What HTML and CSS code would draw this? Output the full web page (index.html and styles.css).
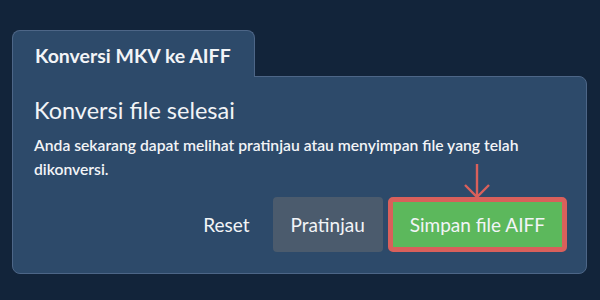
FILE: index.html
```html
<!DOCTYPE html>
<html lang="id">
<head>
    <meta charset="UTF-8">
    <title>Konversi MKV ke AIFF</title>
    <link rel="stylesheet" href="styles.css">
</head>
<body>
    <div class="converter">
        <div class="tab">Konversi MKV ke AIFF</div>
        <div class="panel">
            <h2>Konversi file selesai</h2>
            <p>Anda sekarang dapat melihat pratinjau atau menyimpan file yang telah dikonversi.</p>
            <div class="actions">
                <button class="reset">Reset</button>
                <button class="preview">Pratinjau</button>
                <button class="save">
                    <svg class="hint" width="30" height="36" viewBox="0 0 30 36">
                        <path d="M15 1 V34 M3 22 L15 34 L27 22" fill="none" stroke="#d9605b" stroke-width="2.4"/>
                    </svg>
                    <span>Simpan file AIFF</span>
                </button>
            </div>
        </div>
    </div>
</body>
</html>
```

FILE: styles.css
```css
* {
    margin: 0;
    padding: 0;
    box-sizing: border-box;
}

body {
    background: #12243a;
    font-family: Lato, "Open Sans", sans-serif;
    color: #f2f4f7;
}

.converter {
    margin: 30px 13px 0 12px;
}

.tab {
    display: inline-block;
    width: 243px;
    height: 47px;
    padding: 13px 0 0 22px;
    background: #2d4a6a;
    border: 1px solid #4d6687;
    border-bottom: none;
    border-radius: 8px 8px 0 0;
    font-size: 19.5px;
    font-weight: bold;
    line-height: 1.2;
    position: relative;
    z-index: 1;
    margin-bottom: -1px;
}

.panel {
    background: #2d4a6a;
    border: 1px solid #4d6687;
    border-radius: 0 8px 8px 8px;
    padding: 18px 19px 21px 21px;
}

.panel h2 {
    font-size: 23.5px;
    font-weight: normal;
    line-height: 30px;
}

.panel p {
    font-size: 15.7px;
    font-weight: 600;
    line-height: 24px;
    margin-top: 8px;
}

.actions {
    display: flex;
    justify-content: flex-end;
    align-items: center;
    gap: 5px;
    margin-top: 16px;
}

button {
    border: none;
    font-family: inherit;
    font-size: 19px;
    color: #f2f4f7;
    cursor: pointer;
    height: 55px;
    border-radius: 4px;
}

.reset {
    background: none;
    padding: 0 18px;
}

.preview {
    background: #4b5b6d;
    padding: 0 18px;
}

.save {
    position: relative;
    background: #5cb85c;
    border: 5px solid #d9605b;
    border-radius: 5px;
    padding: 0 17px;
}

.hint {
    position: absolute;
    left: 50%;
    bottom: 100%;
    margin-left: -15px;
    margin-bottom: 3px;
}
```
